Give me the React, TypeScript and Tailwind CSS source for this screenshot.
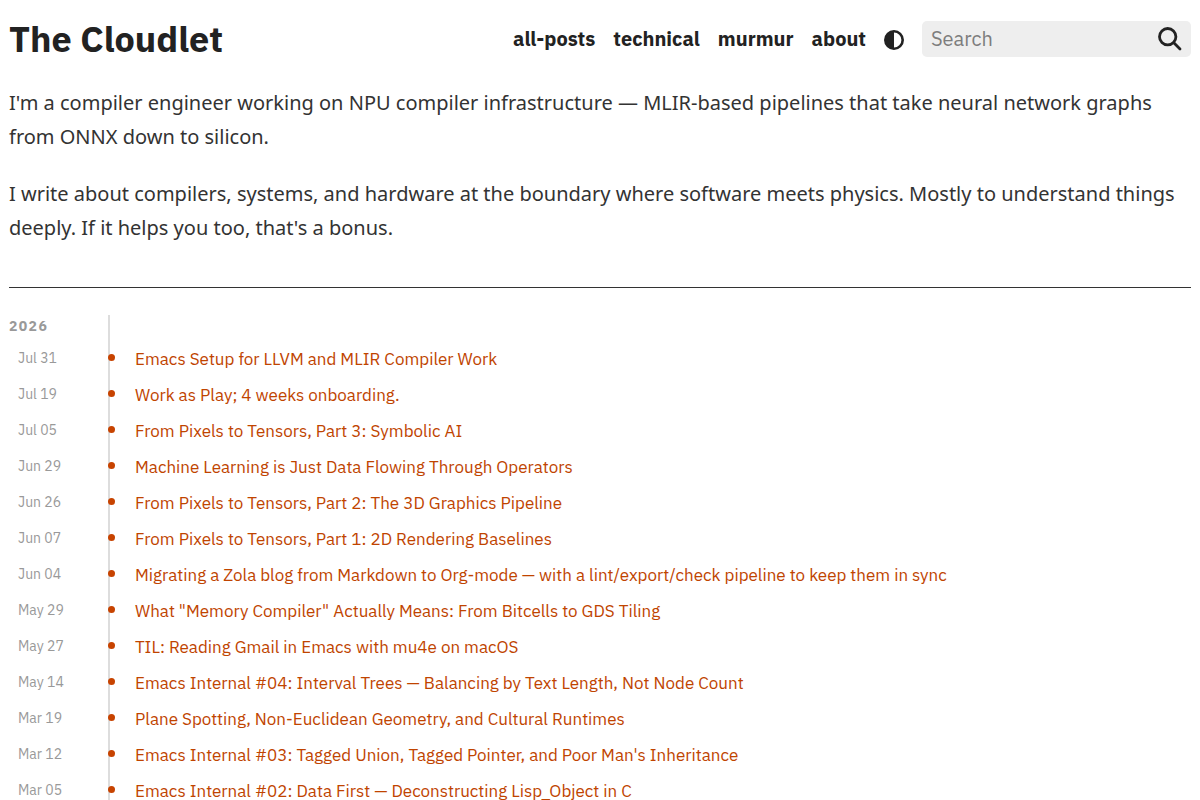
const posts = [
  { date: "Jul 31", title: "Emacs Setup for LLVM and MLIR Compiler Work" },
  { date: "Jul 19", title: "Work as Play; 4 weeks onboarding." },
  { date: "Jul 05", title: "From Pixels to Tensors, Part 3: Symbolic AI" },
  { date: "Jun 29", title: "Machine Learning is Just Data Flowing Through Operators" },
  { date: "Jun 26", title: "From Pixels to Tensors, Part 2: The 3D Graphics Pipeline" },
  { date: "Jun 07", title: "From Pixels to Tensors, Part 1: 2D Rendering Baselines" },
  {
    date: "Jun 04",
    title: "Migrating a Zola blog from Markdown to Org-mode — with a lint/export/check pipeline to keep them in sync",
  },
  { date: "May 29", title: 'What "Memory Compiler" Actually Means: From Bitcells to GDS Tiling' },
  { date: "May 27", title: "TIL: Reading Gmail in Emacs with mu4e on macOS" },
  { date: "May 14", title: "Emacs Internal #04: Interval Trees — Balancing by Text Length, Not Node Count" },
  { date: "Mar 19", title: "Plane Spotting, Non-Euclidean Geometry, and Cultural Runtimes" },
  { date: "Mar 12", title: "Emacs Internal #03: Tagged Union, Tagged Pointer, and Poor Man's Inheritance" },
  { date: "Mar 05", title: "Emacs Internal #02: Data First — Deconstructing Lisp_Object in C" },
];

const links = ["all-posts", "technical", "murmur", "about"];

function ContrastIcon() {
  return (
    <svg viewBox="0 0 20 20" className="size-5" aria-hidden="true">
      <circle cx="10" cy="10" r="8.7" fill="none" stroke="currentColor" strokeWidth="2.6" />
      <path d="M10 1a9 9 0 0 0 0 18z" fill="currentColor" />
    </svg>
  );
}

function SearchIcon() {
  return (
    <svg viewBox="0 0 24 24" className="size-6" fill="none" stroke="currentColor" aria-hidden="true">
      <circle cx="9.7" cy="9.7" r="8.2" strokeWidth="2.8" />
      <path d="M15.8 15.8 22 22" strokeWidth="2.8" strokeLinecap="round" />
    </svg>
  );
}

function Header() {
  return (
    <header className="flex items-center justify-between">
      <h1 className="text-4xl font-bold">
        <a href="#home">The Cloudlet</a>
      </h1>
      <div className="flex items-center gap-[18px]">
        <nav className="flex gap-[18px] text-xl font-bold">
          {links.map((link) => (
            <a key={link} href={`#${link}`}>
              {link}
            </a>
          ))}
        </nav>
        <button type="button" aria-label="Toggle theme" className="mt-px">
          <ContrastIcon />
        </button>
        <form role="search" className="flex h-9 w-[269px] items-center rounded-[5px] bg-[#eeeeee] px-[9px]">
          <input
            type="search"
            aria-label="Search"
            placeholder="Search"
            className="min-w-0 flex-1 bg-transparent text-xl outline-none placeholder:text-[#7d7d7d]"
          />
          <button type="submit" aria-label="Submit search">
            <SearchIcon />
          </button>
        </form>
      </div>
    </header>
  );
}

export default function App() {
  return (
    <div className="bg-white px-[9px] pt-[19px] font-['IBM_Plex_Sans','Roboto',sans-serif] text-[#222222]">
      <Header />
      <main>
        <section className="mt-[27px] space-y-[23px] border-b border-[#333333] pb-[42px] font-['Noto_Sans',sans-serif] text-xl leading-[34px] text-[#333333]">
          <p>
            I'm a compiler engineer working on NPU compiler infrastructure — MLIR-based pipelines that take neural
            network graphs from ONNX down to silicon.
          </p>
          <p>
            I write about compilers, systems, and hardware at the boundary where software meets physics. Mostly to
            understand things deeply. If it helps you too, that's a bonus.
          </p>
        </section>
        <section className="mt-[27px] flex">
          <div className="w-[99px] shrink-0 text-[#999999]">
            <h2 className="text-sm leading-[22px] font-bold tracking-widest">2026</h2>
          </div>
          <div className="min-w-0 flex-1 border-l-2 border-[#dddddd] pt-[27px]">
            <ul>
              {posts.map((post) => (
                <li key={post.title} className="-ml-[92px] flex h-9 items-center">
                  <time className="w-[90px] shrink-0 pb-1 text-sm text-[#999999]">{post.date}</time>
                  <span className="z-10 mb-1.5 size-[7px] shrink-0 rounded-full bg-[#c74300]" />
                  <a href="#post" className="ml-5 text-[17px] text-[#c04400]">
                    {post.title}
                  </a>
                </li>
              ))}
            </ul>
          </div>
        </section>
      </main>
    </div>
  );
}
